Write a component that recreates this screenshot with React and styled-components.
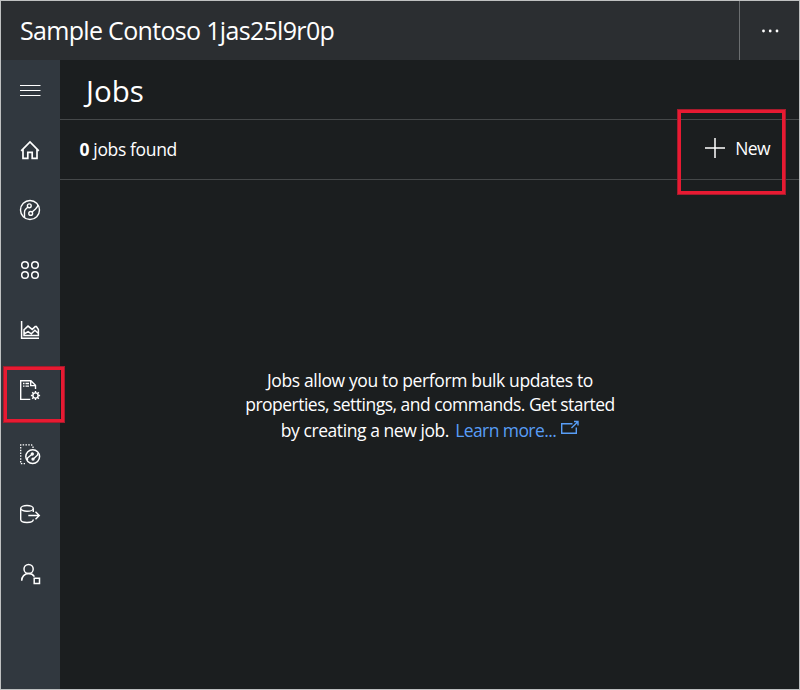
import React from "react";
import styled, { createGlobalStyle } from "styled-components";

const GlobalStyle = createGlobalStyle`
  * { box-sizing: border-box; }
  body { margin: 0; background: #1b1e1f; }
`;

const Window = styled.div`
  position: relative;
  width: 800px;
  height: 690px;
  display: flex;
  flex-direction: column;
  border: 1px solid #bfc1c1;
  background: #1b1e1f;
  color: #fff;
  font-family: "Open Sans", "Noto Sans", sans-serif;
  overflow: hidden;
`;

const TopBar = styled.header`
  flex: 0 0 59px;
  display: flex;
  justify-content: space-between;
  background: #2b2e31;
`;

const AppTitle = styled.div`
  padding-left: 19px;
  font-size: 25px;
  line-height: 59px;
  letter-spacing: -0.68px;
  white-space: nowrap;
`;

const MoreButton = styled.div`
  width: 60px;
  display: flex;
  align-items: center;
  justify-content: center;
  border-left: 1px solid #6b6e70;
`;

const Body = styled.div`
  flex: 1;
  display: flex;
  min-height: 0;
`;

const Sidebar = styled.nav`
  width: 59px;
  display: flex;
  flex-direction: column;
  background: #31383f;
`;

const NavItem = styled.div`
  height: ${(p) => p.$height || 60}px;
  display: flex;
  align-items: flex-start;
  padding: 18px 0 0 17px;
`;

const Main = styled.main`
  flex: 1;
  display: flex;
  flex-direction: column;
`;

const PageHeading = styled.h1`
  height: 60px;
  margin: 0;
  padding-left: 26px;
  border-bottom: 1px solid #454849;
  font-size: 29.5px;
  font-weight: 400;
  line-height: 62px;
  letter-spacing: 0;
`;

const Toolbar = styled.div`
  height: 60px;
  display: flex;
  justify-content: space-between;
  padding: 0 29px 0 19.5px;
  border-bottom: 1px solid #454849;
`;

const Count = styled.div`
  font-size: 17.5px;
  line-height: 59px;
  letter-spacing: -0.36px;
  white-space: nowrap;
`;

const NewButton = styled.div`
  display: flex;
  align-items: center;
  gap: 9px;
  height: 55px;
  font-size: 17.5px;
  line-height: 54px;
  letter-spacing: -0.6px;
`;

const Empty = styled.div`
  flex: 1;
  padding: 188px 0 0 1px;
  display: flex;
  flex-direction: column;
  align-items: center;
`;

const Line = styled.div`
  display: flex;
  height: ${(p) => p.$height || 25}px;
  font-size: 17.5px;
  line-height: 25px;
  letter-spacing: ${(p) => p.$spacing}px;
  white-space: pre;
`;

const Link = styled.span`
  display: flex;
  gap: 5px;
  margin-left: 2px;
  letter-spacing: -0.58px;
  color: #589df6;
`;

const Highlight = styled.div`
  position: absolute;
  left: ${(p) => p.$x}px;
  top: ${(p) => p.$y}px;
  width: ${(p) => p.$w}px;
  height: ${(p) => p.$h}px;
  border: 4px solid #e81a32;
  outline: 1px solid #a51c2d;
  outline-offset: -1px;
`;

const Glyph = styled.svg`
  display: block;
  flex: none;
  fill: none;
  stroke: currentColor;
  stroke-width: ${(p) => p.$weight || 1.4};
`;

const NavIcon = ({ children, weight }) => (
  <Glyph width="24" height="24" viewBox="0 0 24 24" $weight={weight}>{children}</Glyph>
);

const MenuIcon = () => (
  <NavIcon weight={1}><path d="M2 7.5h20.5M2 12.5h20.5M2 17.5h20.5" /></NavIcon>
);

const HomeIcon = () => (
  <NavIcon weight={1.7}>
    <path d="M3.2 12.8 12 4l8.8 8.8M5 11.5v8.8h4.8v-6h4.4v6H19v-8.8" />
  </NavIcon>
);

const DeviceIcon = () => (
  <NavIcon weight={1.4}>
    <circle cx="12" cy="12" r="9.5" />
    <circle cx="11.3" cy="7.8" r="1.9" />
    <circle cx="12.7" cy="15.4" r="1.9" />
    <path d="M9.9 9.1 7.4 11.5c-1 1-.9 2-.9 3.4v4.2M14.1 14l3.4-2.9c1-1 2.2-2.3 2.6-4.1" />
  </NavIcon>
);

const GroupsIcon = () => (
  <NavIcon weight={1.5}>
    <circle cx="7" cy="7" r="3.3" />
    <circle cx="17" cy="7" r="3.3" />
    <circle cx="7" cy="17" r="3.3" />
    <circle cx="17" cy="17" r="3.3" />
  </NavIcon>
);

const AnalyticsIcon = () => (
  <NavIcon weight={1.5}>
    <path d="M3.6 3v17.3H21M6 11.7l4-3.6 4.2 3.3 3-2.8h1.2l2 3v6H6zM6 16l4.1-2.3 3.2 2.2 3.6-3.6 3.5 3.2" />
  </NavIcon>
);

const JobsIcon = () => (
  <NavIcon weight={1.4}>
    <path d="M12.3 21.4H2.7V2.7h10.2l4.6 4.6v3.6M12.7 3v4.6h4.5" />
    <path d="M5 5.5h1.5M7.5 5.5H11M5 8.1h1.5M7.5 8.1H11" />
    <circle cx="17.5" cy="17.5" r="2.6" />
    <path d="M17.5 12.9v2M17.5 20.1v2M12.9 17.5h2M20.1 17.5h2M14.2 14.2l1.5 1.5M19.3 19.3l1.5 1.5M20.8 14.2l-1.5 1.5M15.7 19.3l-1.5 1.5" />
  </NavIcon>
);

const TemplateIcon = () => (
  <NavIcon weight={1.3}>
    <path d="M15 6V4.2L13.5 2.8H2.7v18.8H7" strokeDasharray="1.5 1.3" />
    <circle cx="14.7" cy="14.6" r="6.9" strokeWidth="1.5" />
    <circle cx="14.3" cy="12" r="1" fill="currentColor" />
    <circle cx="15" cy="17.1" r="1" fill="currentColor" />
    <path d="M14 12.2 9.5 16.1v2.1M15.3 16.9l4.3-3.9v-1.8" />
  </NavIcon>
);

const ExportIcon = () => (
  <NavIcon>
    <ellipse cx="9" cy="6.4" rx="6.3" ry="2.9" />
    <path d="M2.7 6.4v11.2c0 1.8 2.8 2.9 6.3 2.9s6.3-1.1 6.3-2.9M15.3 6.4v3.5M10.3 13.5h11M17.5 9.7l3.8 3.8-3.8 3.8" />
  </NavIcon>
);

const AdminIcon = () => (
  <NavIcon weight={1.5}>
    <circle cx="10.6" cy="7" r="4.6" />
    <path d="M3.7 18.7c0-4.1 2.8-7.1 6.9-7.1 2.5 0 4.6 1.1 5.8 3" />
    <path d="M16.2 16.2h5.3v5.3h-5.3z" />
  </NavIcon>
);

const navItems = [
  { id: "menu", Icon: MenuIcon },
  { id: "home", Icon: HomeIcon },
  { id: "devices", Icon: DeviceIcon },
  { id: "groups", Icon: GroupsIcon },
  { id: "analytics", Icon: AnalyticsIcon },
  { id: "jobs", Icon: JobsIcon, height: 64 },
  { id: "templates", Icon: TemplateIcon },
  { id: "export", Icon: ExportIcon },
  { id: "admin", Icon: AdminIcon },
];

export default function App() {
  return (
    <>
      <GlobalStyle />
      <Window>
        <TopBar>
          <AppTitle>Sample Contoso 1jas25l9r0p</AppTitle>
          <MoreButton>
            <Glyph width="20" height="4" viewBox="0 0 20 4">
              <g fill="currentColor" stroke="none">
                <circle cx="3.5" cy="2" r="1.4" />
                <circle cx="10.2" cy="2" r="1.4" />
                <circle cx="17" cy="2" r="1.4" />
              </g>
            </Glyph>
          </MoreButton>
        </TopBar>
        <Body>
          <Sidebar>
            {navItems.map(({ id, Icon, height }) => (
              <NavItem key={id} $height={height}><Icon /></NavItem>
            ))}
          </Sidebar>
          <Main>
            <PageHeading>Jobs</PageHeading>
            <Toolbar>
              <Count><b>0</b> jobs found</Count>
              <NewButton>
                <Glyph width="22" height="22" viewBox="0 0 22 22" $weight={1.5}>
                  <path d="M11 1v20M1 11h20" />
                </Glyph>
                New
              </NewButton>
            </Toolbar>
            <Empty>
              <Line $spacing={-0.37} $height={24}>Jobs allow you to perform bulk updates to</Line>
              <Line $spacing={-0.52} $height={26}>properties, settings, and commands. Get started</Line>
              <Line $spacing={-0.43}>
                by creating a new job.{" "}
                <Link>
                  Learn more...
                  <Glyph width="18" height="18" viewBox="0 -2 18 18" $weight={1.4}>
                    <path d="M11.5 3.7H.7v9.6h14.6V7.5M10.5 8l6.3-6.3M13 1.5h4v4" />
                  </Glyph>
                </Link>
              </Line>
            </Empty>
          </Main>
        </Body>
        <Highlight $x={676} $y={108} $w={109} $h={86} />
        <Highlight $x={2} $y={365} $w={62} $h={57} />
      </Window>
    </>
  );
}
